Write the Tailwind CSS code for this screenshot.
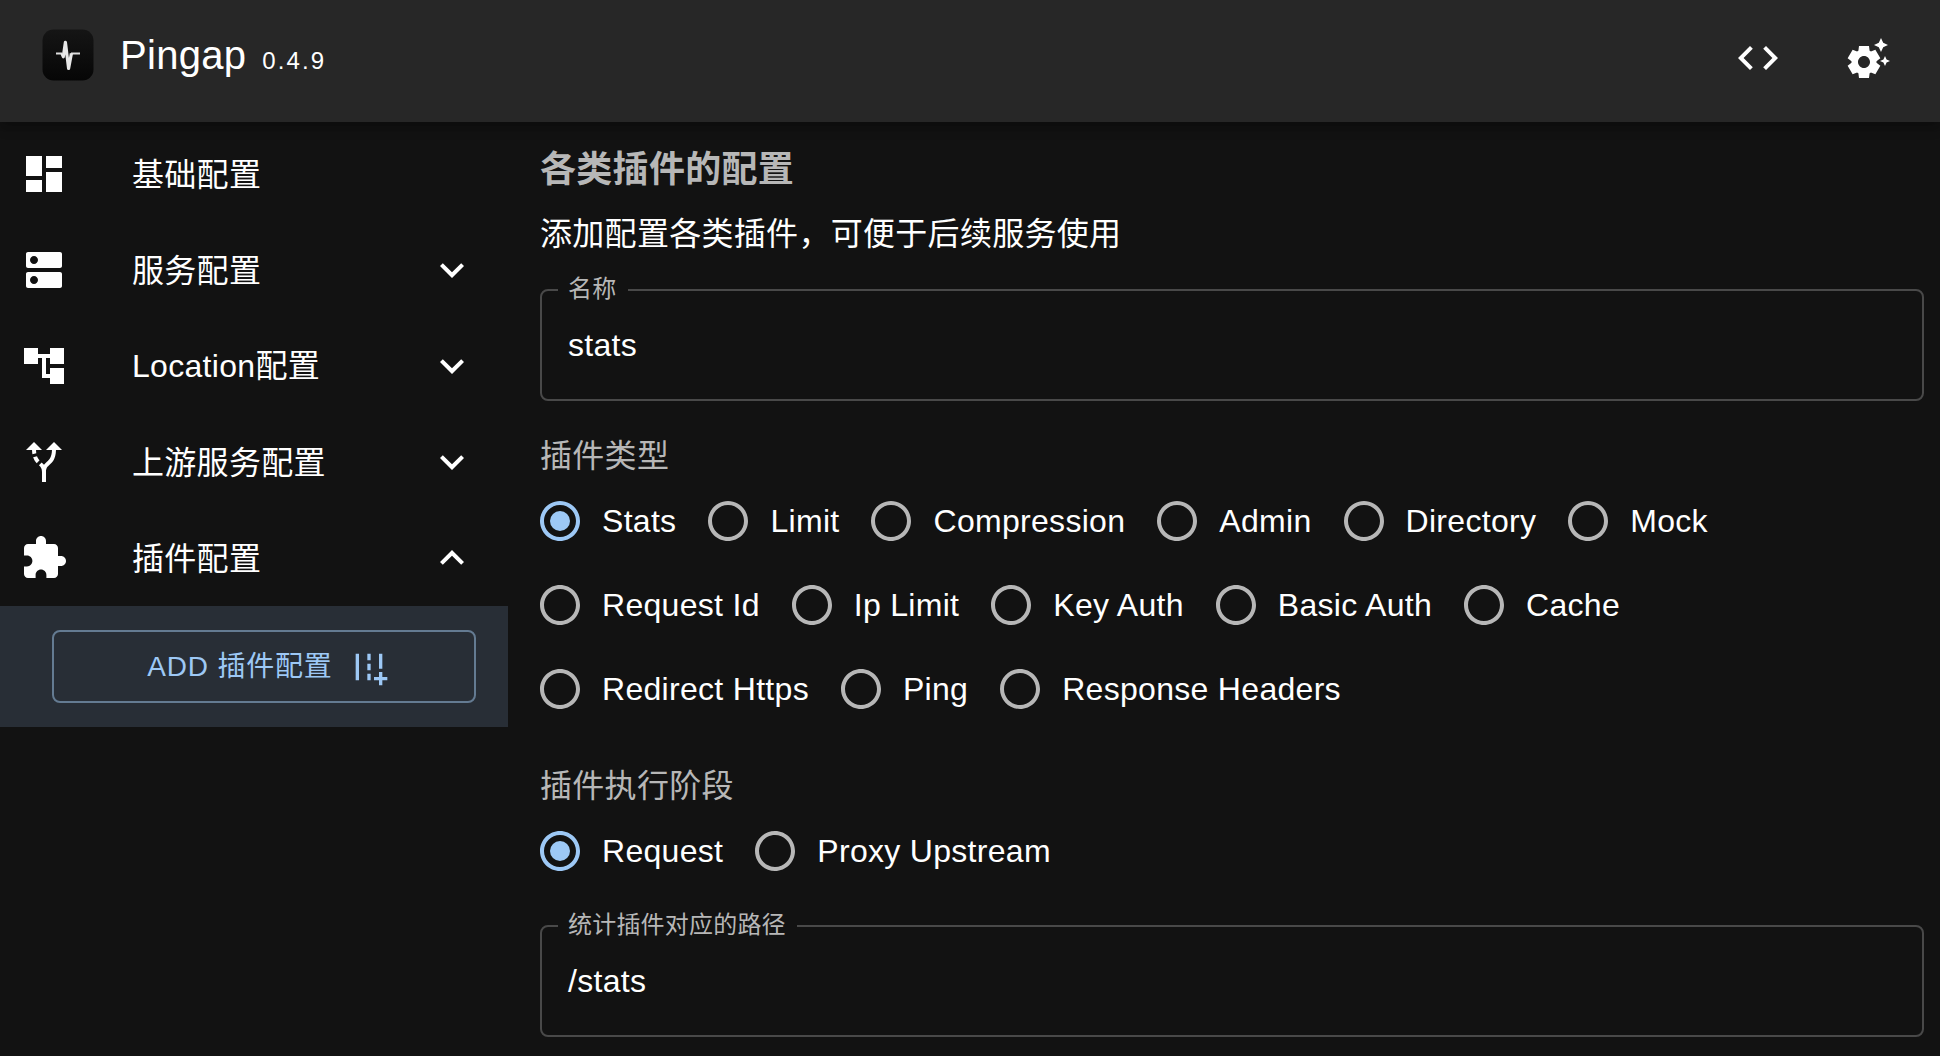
<!DOCTYPE html>
<html lang="zh-CN">
<head>
<meta charset="utf-8">
<title>Pingap</title>
<script src="https://cdn.jsdelivr.net/npm/@tailwindcss/browser@4"></script>
</head>
<body class="h-[1056px] w-[1940px] overflow-hidden bg-[#121212] font-['Liberation_Sans','Noto_Sans_CJK_SC',sans-serif] text-[32px] leading-[48px] tracking-[0.3px] text-white">
<header class="relative flex h-[122px] items-start bg-[#272727] pr-[48px] pl-[42px] shadow-[0_4px_8px_-2px_rgba(0,0,0,0.2),0_8px_10px_rgba(0,0,0,0.14)]">
  <svg class="mt-[29px] size-[52px] shrink-0" viewBox="0 0 52 52">
    <defs><linearGradient id="lg" x1="0" y1="0" x2="0" y2="1"><stop offset="0" stop-color="#151515"/><stop offset="1" stop-color="#060606"/></linearGradient></defs>
    <rect x=".5" y=".5" width="51" height="51" rx="11" fill="url(#lg)"/>
    <path d="M14 24.400h6.300M29 24.400h9" fill="none" stroke="#dcdcdc" stroke-width="2"/>
    <path d="M20 24.400l1.300 3.400 2.100-14.500 3.200 26.200 2.800-15.100" fill="none" stroke="#e8e8e8" stroke-width="3.200" stroke-linejoin="round"/>
  </svg>
  <h1 class="ml-[26px] flex flex-1 items-baseline pt-[25px] text-[40px] leading-[60px]">Pingap<span class="ml-[16px] text-2xl tracking-[2.100px]">0.4.9</span></h1>
  <svg class="mt-[34px] size-12 fill-white" viewBox="0 0 24 24"><path d="M9.4 16.6 4.8 12l4.600-4.600L8 6l-6 6 6 6zm5.200 0 4.600-4.600-4.600-4.600L16 6l6 6-6 6z"/></svg>
  <svg class="mt-[34px] ml-[62px] size-12 fill-white" viewBox="0 0 24 24"><path d="M17.410 6.590 15 5.500l2.410-1.090L18.500 2l1.090 2.410L22 5.500l-2.410 1.090L18.500 9zm3.870 6.130L20.500 11l-.78 1.720-1.720.78 1.720.78.78 1.720.78-1.720L23 13.500zm-5.040 1.650 1.940 1.470-2.500 4.330-2.240-.94c-.2.13-.42.26-.64.37l-.3 2.400h-5l-.3-2.410c-.22-.11-.43-.23-.64-.37l-2.240.94-2.500-4.330 1.940-1.470c-.01-.11-.01-.24-.01-.36s0-.25.01-.37l-1.940-1.470 2.500-4.330 2.240.94c.2-.13.42-.26.64-.37L7.500 6h5l.3 2.410c.22.11.43.23.64.37l2.240-.94 2.500 4.330-1.940 1.470c.01.12.01.24.01.37s0 .24-.01.36M13 14c0-1.660-1.340-3-3-3s-3 1.340-3 3 1.340 3 3 3 3-1.340 3-3"/></svg>
</header>
<div class="flex">
  <nav class="w-[508px] shrink-0 pt-1">
    <a class="flex h-24 items-center pr-8 pl-5"><svg class="size-12 fill-white" viewBox="0 0 24 24"><path d="M3 13h8V3H3zm0 8h8v-6H3zm10 0h8V11h-8zm0-18v6h8V3z"/></svg><span class="ml-16 flex-1 pt-px">基础配置</span></a>
    <a class="flex h-24 items-center pr-8 pl-5"><svg class="size-12 fill-white" viewBox="0 0 24 24"><path d="M20 13H4c-.55 0-1 .45-1 1v6c0 .55.45 1 1 1h16c.55 0 1-.45 1-1v-6c0-.55-.45-1-1-1M7 19c-1.100 0-2-.9-2-2s.9-2 2-2 2 .9 2 2-.9 2-2 2M20 3H4c-.55 0-1 .45-1 1v6c0 .55.45 1 1 1h16c.55 0 1-.45 1-1V4c0-.55-.45-1-1-1M7 9c-1.100 0-2-.9-2-2s.9-2 2-2 2 .9 2 2-.9 2-2 2"/></svg><span class="ml-16 flex-1 pt-px">服务配置</span><svg class="size-12 fill-white" viewBox="0 0 24 24"><path d="M16.590 8.590 12 13.170 7.410 8.590 6 10l6 6 6-6z"/></svg></a>
    <a class="flex h-24 items-center pr-8 pl-5"><svg class="size-12 fill-white" viewBox="0 0 24 24"><path d="M22 11V3h-7v3H9V3H2v8h7V8h2v10h4v3h7v-8h-7v3h-2V8h2v3z"/></svg><span class="ml-16 flex-1">Location配置</span><svg class="size-12 fill-white" viewBox="0 0 24 24"><path d="M16.590 8.590 12 13.170 7.410 8.590 6 10l6 6 6-6z"/></svg></a>
    <a class="flex h-24 items-center pr-8 pl-5"><svg class="size-12 fill-white" viewBox="0 0 24 24"><path d="m9.780 11.160-1.420 1.420c-.68-.69-1.340-1.580-1.790-2.940l1.940-.49c.32.89.77 1.500 1.270 2.010zM11 6 7 2 3 6h3.020c.02.81.08 1.540.19 2.170l1.940-.49C8.080 7.200 8.030 6.630 8.020 6zm10 0-4-4-4 4h2.990c-.1 3.680-1.280 4.750-2.540 5.880-.5.44-1.010.92-1.450 1.550-.34-.49-.73-.88-1.130-1.240L9.460 13.600c.93.85 1.540 1.540 1.540 3.400v5h2v-5c0-2.020.71-2.660 1.790-3.630 1.380-1.240 3.080-2.780 3.200-7.370z"/></svg><span class="ml-16 flex-1 pt-px">上游服务配置</span><svg class="size-12 fill-white" viewBox="0 0 24 24"><path d="M16.590 8.590 12 13.170 7.410 8.590 6 10l6 6 6-6z"/></svg></a>
    <a class="flex h-24 items-center pr-8 pl-5"><svg class="size-12 fill-white" viewBox="0 0 24 24"><path d="M20.500 11H19V7c0-1.100-.9-2-2-2h-4V3.500C13 2.120 11.880 1 10.500 1S8 2.120 8 3.500V5H4c-1.100 0-1.990.9-1.990 2v3.800H3.500c1.490 0 2.700 1.210 2.700 2.700s-1.210 2.700-2.700 2.700H2V20c0 1.100.9 2 2 2h3.800v-1.500c0-1.490 1.210-2.700 2.700-2.700s2.700 1.210 2.700 2.700V22H17c1.100 0 2-.9 2-2v-4h1.500c1.380 0 2.500-1.120 2.500-2.500S21.880 11 20.500 11"/></svg><span class="ml-16 flex-1 pt-px">插件配置</span><svg class="size-12 fill-white" viewBox="0 0 24 24"><path d="m12 8-6 6 1.410 1.410L12 10.830l4.590 4.580L18 14z"/></svg></a>
    <div class="h-[121px] bg-[#282e36] pt-6 pr-8 pl-[52px]">
      <button class="flex h-[73px] w-full items-center justify-center rounded-lg border-2 border-[#647b92] text-[28px] tracking-[0.8px] text-[#9dc8f5]">ADD 插件配置<svg class="-mr-2 ml-4 size-10 fill-current" viewBox="0 0 24 24"><path d="M20 18v-3h-2v3h-3v2h3v3h2v-3h3v-2zM18 4h2v9h-2zM4 4h2v16H4zm7 0h2v4h-2zm0 6h2v4h-2zm0 6h2v4h-2z"/></svg></button>
    </div>
  </nav>
  <main class="flex-1 pt-6 pr-4 pl-8">
    <h2 class="text-[36px] font-bold text-[#b7b7b7]">各类插件的配置</h2>
    <p class="mt-4">添加配置各类插件，可便于后续服务使用</p>
    <div class="relative mt-[31px] flex h-28 items-center rounded-lg border-2 border-[#494949] pl-[26px]">
      <label class="absolute -top-[14px] left-4 bg-[#121212] pr-3 pl-[10px] text-2xl leading-6 tracking-[0.2px] text-[#b7b7b7]">名称</label>stats
    </div>
    <p class="mt-[31px] text-[#b7b7b7]">插件类型</p>
    <div id="types" class="-mt-px -ml-1 flex flex-wrap gap-x-7 pr-8"></div>
    <p class="mt-[31px] text-[#b7b7b7]">插件执行阶段</p>
    <div id="steps" class="-mt-px -ml-1 flex flex-wrap gap-x-7"></div>
    <div class="relative mt-8 flex h-28 items-center rounded-lg border-2 border-[#494949] pl-[26px]">
      <label class="absolute -top-[14px] left-4 bg-[#121212] pr-[11px] pl-[10px] text-2xl leading-6 tracking-[0.2px] text-[#b7b7b7]">统计插件对应的路径</label>/stats
    </div>
  </main>
</div>
<script>
const radio = (name, on) => `<label class="flex h-[84px] items-center whitespace-nowrap"><svg class="mr-[18px] size-12 ${on ? 'fill-[#9dc8f5]' : 'fill-[#b7b7b7]'}" viewBox="0 0 24 24"><path d="M12 2C6.480 2 2 6.480 2 12s4.480 10 10 10 10-4.480 10-10S17.520 2 12 2m0 18c-4.420 0-8-3.580-8-8s3.580-8 8-8 8 3.580 8 8-3.580 8-8 8"/>${on ? '<circle cx="12" cy="12" r="5"/>' : ''}</svg>${name}</label>`;
const fill = (id, names) => document.getElementById(id).innerHTML = names.map((n, i) => radio(n, i === 0)).join('');
fill('types', ['Stats', 'Limit', 'Compression', 'Admin', 'Directory', 'Mock', 'Request Id', 'Ip Limit', 'Key Auth', 'Basic Auth', 'Cache', 'Redirect Https', 'Ping', 'Response Headers']);
fill('steps', ['Request', 'Proxy Upstream']);
</script>
</body>
</html>
